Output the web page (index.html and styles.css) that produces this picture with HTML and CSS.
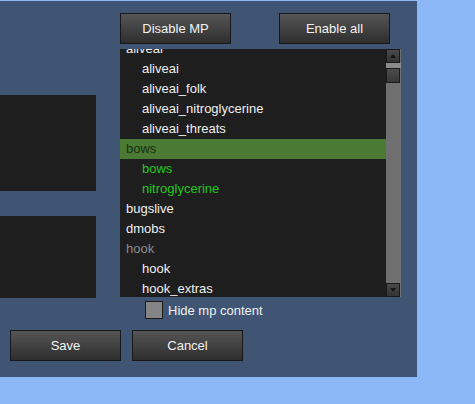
FILE: index.html
```html
<!DOCTYPE html>
<html>
<head>
<meta charset="UTF-8">
<link rel="stylesheet" href="styles.css">
</head>
<body>

<div class="panel">
    <div class="top">
        <!-- left column: two preview boxes -->
        <div class="left-col">
            <div class="preview preview-big"></div>
            <div class="preview preview-small"></div>
        </div>

        <!-- right column: mod list -->
        <div class="right-col">
            <div class="btn-row">
                <button class="btn">Disable MP</button>
                <button class="btn">Enable all</button>
            </div>

            <div class="listbox">
                <div class="list">
                    <div class="row header">aliveai</div>
                    <div class="row child">aliveai</div>
                    <div class="row child">aliveai_folk</div>
                    <div class="row child">aliveai_nitroglycerine</div>
                    <div class="row child">aliveai_threats</div>
                    <div class="row header selected">bows</div>
                    <div class="row child enabled">bows</div>
                    <div class="row child enabled">nitroglycerine</div>
                    <div class="row header">bugslive</div>
                    <div class="row header">dmobs</div>
                    <div class="row header dim">hook</div>
                    <div class="row child">hook</div>
                    <div class="row child">hook_extras</div>
                </div>
                <div class="scrollbar">
                    <div class="sb-btn sb-up"></div>
                    <div class="sb-gap"></div>
                    <div class="sb-thumb"></div>
                    <div class="sb-track"></div>
                    <div class="sb-btn sb-down"></div>
                </div>
            </div>

            <label class="check-row">
                <span class="checkbox"></span>
                <span>Hide mp content</span>
            </label>
        </div>
    </div>

    <div class="bottom">
        <button class="btn">Save</button>
        <button class="btn">Cancel</button>
    </div>
</div>

</body>
</html>
```

FILE: styles.css
```css
html, body {
    margin: 0;
    padding: 0;
    font-family: "Liberation Sans", Arial, sans-serif;
    font-size: 13px;
}

body {
    background-color: #8db8f8;
    height: 404px;
    overflow: hidden;
}

.panel {
    width: 417px;
    height: 376px;
    margin-top: 1px;
    background-color: #3f5573;
    box-sizing: border-box;
    padding-top: 12px;
    display: flex;
    flex-direction: column;
}

.top {
    display: flex;
    flex-direction: row;
}

.left-col {
    width: 96px;
    padding-top: 82px;
    display: flex;
    flex-direction: column;
    gap: 25px;
}

.preview {
    background-color: #1e1e1e;
}
.preview-big { height: 96px; }
.preview-small { height: 82px; }

.right-col {
    margin-left: 24px;
    width: 281px;
    display: flex;
    flex-direction: column;
}

.btn-row {
    width: 270px;
    display: flex;
    justify-content: space-between;
}

.btn {
    width: 111px;
    height: 31px;
    padding: 0;
    border: 1px solid #181818;
    background: linear-gradient(#555555, #2e2e2e);
    color: #f2f2f2;
    font-family: "Liberation Sans", Arial, sans-serif;
    font-size: 13px;
}

.listbox {
    margin-top: 5px;
    height: 248px;
    display: flex;
    flex-direction: row;
}

.list {
    width: 266px;
    height: 248px;
    overflow: hidden;
    background-color: #1e1e1e;
}

.row {
    height: 20px;
    line-height: 20px;
    color: #f0f0f0;
    white-space: nowrap;
}
.row:first-child { margin-top: -10px; }
.header { padding-left: 6px; }
.child { padding-left: 22px; }
.dim { color: #8c8c8c; }
.enabled { color: #1fc81f; }
.selected {
    background-color: #4a7a33;
    color: #173110;
}

.scrollbar {
    width: 15px;
    height: 248px;
    background-color: #6f6f6f;
    display: flex;
    flex-direction: column;
}

.sb-btn {
    width: 14px;
    height: 14px;
    box-sizing: border-box;
    border: 1px solid #1a1a1a;
    background: linear-gradient(#4a4a4a, #333333);
    position: relative;
}
.sb-btn::after {
    content: "";
    position: absolute;
    left: 3px;
    top: 4px;
    border-left: 3px solid transparent;
    border-right: 3px solid transparent;
}
.sb-up::after { border-bottom: 4px solid #151515; }
.sb-down::after { border-top: 4px solid #151515; }

.sb-gap {
    height: 5px;
    background-color: #8a8a8a;
}

.sb-thumb {
    width: 14px;
    height: 15px;
    box-sizing: border-box;
    border: 1px solid #1a1a1a;
    background: linear-gradient(#4c4c4c, #383838);
}

.sb-track { flex: 1; }

.check-row {
    margin-top: 4px;
    margin-left: 25px;
    height: 18px;
    display: flex;
    align-items: center;
    gap: 5px;
    color: #f0f0f0;
}

.checkbox {
    width: 18px;
    height: 18px;
    box-sizing: border-box;
    border: 1px solid #1c1c1c;
    background-color: #858585;
}

.bottom {
    margin-top: 11px;
    margin-left: 10px;
    display: flex;
    gap: 11px;
}
```
